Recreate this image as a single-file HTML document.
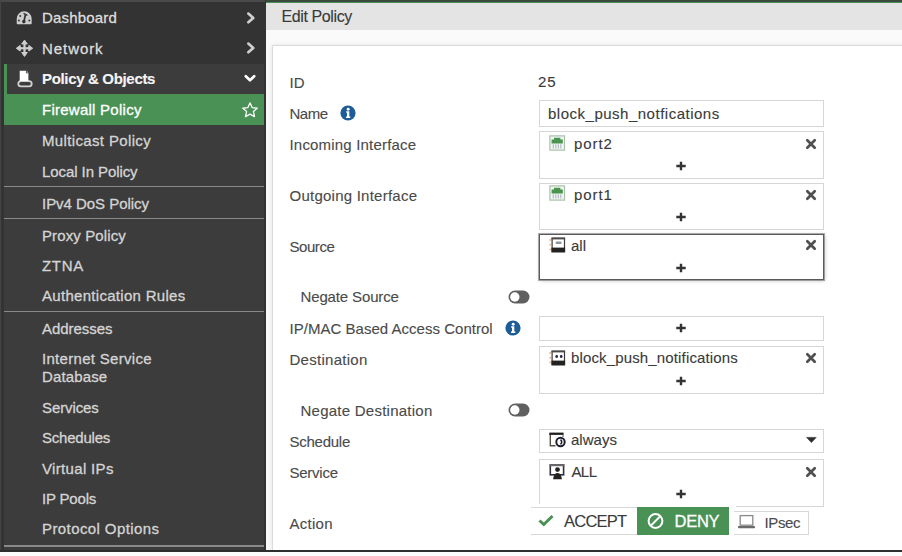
<!DOCTYPE html>
<html><head><meta charset="utf-8"><style>
html,body{margin:0;padding:0;width:902px;height:556px;overflow:hidden;background:#333;}
body{position:relative;font-family:"Liberation Sans",sans-serif;}
.t{position:absolute;white-space:nowrap;line-height:20px;-webkit-text-stroke:0.12px currentColor;}
.w{-webkit-text-stroke:0.3px currentColor;}
#side{position:absolute;left:0;top:0;width:266px;height:550px;background:#333;}
</style></head><body>
<div id="side"></div><div style="position:absolute;left:0;top:0;width:265px;height:1.5px;background:#4a4a4a"></div><div style="position:absolute;left:0;top:0;width:1px;height:550px;background:#444"></div><div style="position:absolute;left:4px;top:63.5px;width:260px;height:487px;background:#3c3c3c"></div><div style="position:absolute;left:4px;top:64px;width:3px;height:30px;background:#4a9155"></div><div style="position:absolute;left:4px;top:94px;width:260.2px;height:31px;background:#4a9155"></div><div style="position:absolute;left:4px;top:185.7px;width:260px;height:1.6px;background:#8a8a8a"></div><div style="position:absolute;left:4px;top:217.7px;width:260px;height:1.6px;background:#8a8a8a"></div><div style="position:absolute;left:4px;top:310.7px;width:260px;height:1.6px;background:#8a8a8a"></div><div style="position:absolute;left:4px;top:545.2px;width:260px;height:1.6px;background:#8a8a8a"></div><div class="t w" style="left:42px;top:7.54px;font-size:15px;color:#dedede;font-weight:normal;letter-spacing:0.177px;">Dashboard</div>
<div class="t w" style="left:42px;top:38.54px;font-size:15px;color:#dedede;font-weight:normal;letter-spacing:0.931px;">Network</div>
<div class="t" style="left:42px;top:68.74px;font-size:15px;color:#f4f4f4;font-weight:bold;letter-spacing:-0.332px;">Policy &amp; Objects</div>
<div class="t w" style="left:42px;top:99.64px;font-size:15px;color:#fff;font-weight:normal;letter-spacing:0.253px;">Firewall Policy</div>
<div class="t w" style="left:42px;top:130.54px;font-size:15px;color:#d4d4d4;font-weight:normal;letter-spacing:0.356px;">Multicast Policy</div>
<div class="t w" style="left:42px;top:161.54px;font-size:15px;color:#d4d4d4;font-weight:normal;letter-spacing:-0.080px;">Local In Policy</div>
<div class="t w" style="left:42px;top:193.54px;font-size:15px;color:#d4d4d4;font-weight:normal;letter-spacing:-0.039px;">IPv4 DoS Policy</div>
<div class="t w" style="left:42px;top:225.54px;font-size:15px;color:#d4d4d4;font-weight:normal;letter-spacing:0.116px;">Proxy Policy</div>
<div class="t w" style="left:42px;top:255.64px;font-size:15px;color:#d4d4d4;font-weight:normal;letter-spacing:0.712px;">ZTNA</div>
<div class="t w" style="left:42px;top:286.04px;font-size:15px;color:#d4d4d4;font-weight:normal;letter-spacing:0.298px;">Authentication Rules</div>
<div class="t w" style="left:42px;top:318.64px;font-size:15px;color:#d4d4d4;font-weight:normal;letter-spacing:-0.046px;">Addresses</div>
<div class="t w" style="left:42px;top:348.84px;font-size:15px;color:#d4d4d4;font-weight:normal;letter-spacing:0.303px;">Internet Service</div>
<div class="t w" style="left:42px;top:366.84px;font-size:15px;color:#d4d4d4;font-weight:normal;letter-spacing:0.141px;">Database</div>
<div class="t w" style="left:42px;top:397.84px;font-size:15px;color:#d4d4d4;font-weight:normal;letter-spacing:-0.103px;">Services</div>
<div class="t w" style="left:42px;top:427.64px;font-size:15px;color:#d4d4d4;font-weight:normal;letter-spacing:-0.219px;">Schedules</div>
<div class="t w" style="left:42px;top:458.64px;font-size:15px;color:#d4d4d4;font-weight:normal;letter-spacing:0.331px;">Virtual IPs</div>
<div class="t w" style="left:42px;top:489.04px;font-size:15px;color:#d4d4d4;font-weight:normal;letter-spacing:-0.185px;">IP Pools</div>
<div class="t w" style="left:42px;top:519.24px;font-size:15px;color:#d4d4d4;font-weight:normal;letter-spacing:0.407px;">Protocol Options</div>
<svg style="position:absolute;left:243.5px;top:10px" width="14" height="16"><path d="M4.3 3.6 L9.3 7.9 L4.3 12.2" fill="none" stroke="#cfcfcf" stroke-width="2.7" stroke-linecap="round" stroke-linejoin="round"/></svg><svg style="position:absolute;left:243.5px;top:40.3px" width="14" height="16"><path d="M4.3 3.6 L9.3 7.9 L4.3 12.2" fill="none" stroke="#cfcfcf" stroke-width="2.7" stroke-linecap="round" stroke-linejoin="round"/></svg><svg style="position:absolute;left:241.5px;top:72px" width="16" height="13"><path d="M3.8 4.3 L8 8.3 L12.2 4.3" fill="none" stroke="#fff" stroke-width="2.7" stroke-linecap="round" stroke-linejoin="round"/></svg><svg style="position:absolute;left:241px;top:101px" width="18" height="18"><path d="M9 1.8 L11.1 6.6 L16.3 7.1 L12.4 10.6 L13.5 15.7 L9 13.1 L4.5 15.7 L5.6 10.6 L1.7 7.1 L6.9 6.6 Z" fill="none" stroke="#fff" stroke-width="1.3" stroke-linejoin="round"/></svg><svg style="position:absolute;left:16.4px;top:9.7px" width="16.6" height="15.7" viewBox="0 0 18 17"><path d="M0.8 14.6 L0.8 9.4 A8.1 8.1 0 0 1 17 9.4 L17 14.6 Q17 15.4 16.2 15.4 L1.6 15.4 Q0.8 15.4 0.8 14.6 Z" fill="#cdcdcd"/><circle cx="4.6" cy="6.6" r="1.1" fill="#3a3a3a"/><circle cx="3.2" cy="11.4" r="1.1" fill="#3a3a3a"/><circle cx="14.4" cy="11.4" r="1.1" fill="#3a3a3a"/><path d="M8.6 12.8 L10.2 5" stroke="#333" stroke-width="1.9"/><path d="M8.2 3.6 L12.4 5.8" stroke="#333" stroke-width="1.5"/><circle cx="8.5" cy="12.6" r="1.9" fill="#333"/></svg><svg style="position:absolute;left:15.2px;top:39px" width="19" height="19"><g fill="#cdcdcd" stroke="#cdcdcd" stroke-width="1" stroke-linejoin="round"><path d="M9.5 1.1 L12.3 5 L6.7 5 Z"/><path d="M9.5 17.4 L12.3 13.5 L6.7 13.5 Z"/><path d="M1.3 9.25 L5.2 6.45 L5.2 12.05 Z"/><path d="M17.7 9.25 L13.8 6.45 L13.8 12.05 Z"/></g><g fill="#cdcdcd"><rect x="8.4" y="4.5" width="2.2" height="9.5"/><rect x="4.5" y="8.15" width="10" height="2.2"/></g></svg><svg style="position:absolute;left:15px;top:69px" width="20" height="20"><rect x="3.3" y="12.1" width="13.4" height="5.2" rx="2.6" fill="none" stroke="#cfcfcf" stroke-width="1.8"/><path d="M4.7 1.7 L11.6 1.7 L13.4 3.7 L13.4 12 L4.7 12 Z" fill="#fff"/><path d="M11.4 1.7 L11.4 3.9 L13.4 3.9" fill="none" stroke="#3c3c3c" stroke-width="0.9"/></svg><div style="position:absolute;left:266px;top:0;width:637px;height:1.5px;background:#3a4a3c"></div><div style="position:absolute;left:266px;top:1.5px;width:637px;height:1px;background:#4b8f55"></div><div style="position:absolute;left:266px;top:2.5px;width:637px;height:27px;background:#e4e4e4"></div><div style="position:absolute;left:266px;top:29.5px;width:637px;height:520px;background:#fafafa"></div><div style="position:absolute;left:272.5px;top:45.5px;width:640px;height:505px;background:#fff;box-shadow:0 0 1px 1px rgba(0,0,0,0.09), 0 0 5px 1px rgba(0,0,0,0.07)"></div><div style="position:absolute;left:0;top:549.5px;width:902px;height:2.5px;background:#2e2e2e"></div><div style="position:absolute;left:0;top:552px;width:902px;height:4px;background:#fcfcfc"></div><div class="t" style="left:281.5px;top:6.51px;font-size:16px;color:#3a3a3a;font-weight:normal;letter-spacing:-0.390px;">Edit Policy</div>
<div class="t" style="left:289.5px;top:73.44px;font-size:15px;color:#4a4a4a;font-weight:normal;letter-spacing:0.000px;">ID</div>
<div class="t" style="left:289.5px;top:103.94px;font-size:15px;color:#4a4a4a;font-weight:normal;letter-spacing:-0.505px;">Name</div>
<div class="t" style="left:289.5px;top:134.64px;font-size:15px;color:#4a4a4a;font-weight:normal;letter-spacing:0.188px;">Incoming Interface</div>
<div class="t" style="left:289.5px;top:185.94px;font-size:15px;color:#4a4a4a;font-weight:normal;letter-spacing:0.240px;">Outgoing Interface</div>
<div class="t" style="left:289.5px;top:237.34px;font-size:15px;color:#4a4a4a;font-weight:normal;letter-spacing:-0.446px;">Source</div>
<div class="t" style="left:300.5px;top:286.64px;font-size:15px;color:#4a4a4a;font-weight:normal;letter-spacing:-0.139px;">Negate Source</div>
<div class="t" style="left:289.5px;top:319.14px;font-size:15px;color:#4a4a4a;font-weight:normal;letter-spacing:0.024px;">IP/MAC Based Access Control</div>
<div class="t" style="left:289.5px;top:350.34px;font-size:15px;color:#4a4a4a;font-weight:normal;letter-spacing:0.275px;">Destination</div>
<div class="t" style="left:300.5px;top:401.44px;font-size:15px;color:#4a4a4a;font-weight:normal;letter-spacing:0.248px;">Negate Destination</div>
<div class="t" style="left:289.5px;top:431.94px;font-size:15px;color:#4a4a4a;font-weight:normal;letter-spacing:-0.250px;">Schedule</div>
<div class="t" style="left:289.5px;top:462.94px;font-size:15px;color:#4a4a4a;font-weight:normal;letter-spacing:-0.253px;">Service</div>
<div class="t" style="left:289.5px;top:514.04px;font-size:15px;color:#4a4a4a;font-weight:normal;letter-spacing:0.262px;">Action</div>
<div class="t" style="left:538px;top:72.44px;font-size:15px;color:#3a3a3a;font-weight:normal;letter-spacing:0.815px;">25</div>
<div style="position:absolute;left:538.5px;top:100px;width:285.8px;height:27px;box-sizing:border-box;border:1.3px solid #d6d6d6;background:#fff;"></div>
<div class="t" style="left:548px;top:103.84px;font-size:15px;color:#3a3a3a;font-weight:normal;letter-spacing:0.504px;">block_push_notfications</div>
<div style="position:absolute;left:538.5px;top:131px;width:285.8px;height:48px;box-sizing:border-box;border:1.3px solid #d6d6d6;background:#fff;"></div>
<div style="position:absolute;left:538.5px;top:183px;width:285.8px;height:47px;box-sizing:border-box;border:1.3px solid #d6d6d6;background:#fff;"></div>
<div style="position:absolute;left:538.5px;top:234px;width:285.8px;height:46px;box-sizing:border-box;border:1px solid #5a5a5a;background:#fff;box-shadow:0 0 0.5px 0.7px rgba(0,0,0,0.3), 1px 1px 4px rgba(0,0,0,0.2)"></div>
<div style="position:absolute;left:538.5px;top:316px;width:285.8px;height:25px;box-sizing:border-box;border:1.3px solid #d6d6d6;background:#fff;"></div>
<div style="position:absolute;left:538.5px;top:346px;width:285.8px;height:48px;box-sizing:border-box;border:1.3px solid #d6d6d6;background:#fff;"></div>
<div style="position:absolute;left:538.5px;top:429px;width:285.8px;height:24px;box-sizing:border-box;border:1.3px solid #d6d6d6;background:#fff;"></div>
<div style="position:absolute;left:538.5px;top:459px;width:285.8px;height:48px;box-sizing:border-box;border:1.3px solid #d6d6d6;background:#fff;"></div>
<svg style="position:absolute;left:674.6px;top:160.1px" width="12" height="12"><path d="M6 1.7 V10.3 M1.3 6 H10.7" stroke="#333" stroke-width="2.4"/></svg>
<svg style="position:absolute;left:674.6px;top:211.1px" width="12" height="12"><path d="M6 1.7 V10.3 M1.3 6 H10.7" stroke="#333" stroke-width="2.4"/></svg>
<svg style="position:absolute;left:674.6px;top:261.6px" width="12" height="12"><path d="M6 1.7 V10.3 M1.3 6 H10.7" stroke="#333" stroke-width="2.4"/></svg>
<svg style="position:absolute;left:674.6px;top:321.6px" width="12" height="12"><path d="M6 1.7 V10.3 M1.3 6 H10.7" stroke="#333" stroke-width="2.4"/></svg>
<svg style="position:absolute;left:674.6px;top:374.6px" width="12" height="12"><path d="M6 1.7 V10.3 M1.3 6 H10.7" stroke="#333" stroke-width="2.4"/></svg>
<svg style="position:absolute;left:674.6px;top:487.6px" width="12" height="12"><path d="M6 1.7 V10.3 M1.3 6 H10.7" stroke="#333" stroke-width="2.4"/></svg>
<svg style="position:absolute;left:804.2px;top:136.6px" width="14" height="14"><path d="M3.3 3.3 L10.7 10.7 M10.7 3.3 L3.3 10.7" stroke="#505050" stroke-width="2.7" stroke-linecap="round"/></svg>
<svg style="position:absolute;left:804.2px;top:187.6px" width="14" height="14"><path d="M3.3 3.3 L10.7 10.7 M10.7 3.3 L3.3 10.7" stroke="#505050" stroke-width="2.7" stroke-linecap="round"/></svg>
<svg style="position:absolute;left:804.2px;top:238.1px" width="14" height="14"><path d="M3.3 3.3 L10.7 10.7 M10.7 3.3 L3.3 10.7" stroke="#505050" stroke-width="2.7" stroke-linecap="round"/></svg>
<svg style="position:absolute;left:804.2px;top:350.6px" width="14" height="14"><path d="M3.3 3.3 L10.7 10.7 M10.7 3.3 L3.3 10.7" stroke="#505050" stroke-width="2.7" stroke-linecap="round"/></svg>
<svg style="position:absolute;left:804.2px;top:465.1px" width="14" height="14"><path d="M3.3 3.3 L10.7 10.7 M10.7 3.3 L3.3 10.7" stroke="#505050" stroke-width="2.7" stroke-linecap="round"/></svg>
<svg style="position:absolute;left:549px;top:135px" width="17" height="17"><rect x="0.9" y="0.9" width="14.6" height="14.2" fill="#f2f7f4" stroke="#a9c0a9" stroke-width="1.2"/><path d="M2.6 4.6 L5 4.6 L5 2.8 L11.4 2.8 L11.4 4.6 L13.8 4.6 L13.8 8.6 L2.6 8.6 Z" fill="#4a944e"/><path d="M4.3 9.2 V13.4 M6.8 9.2 V13.4 M9.3 9.2 V13.4 M11.8 9.2 V13.4" stroke="#b0b6c0" stroke-width="1.1"/></svg>
<div class="t" style="left:574px;top:134.24px;font-size:15px;color:#3a3a3a;font-weight:normal;letter-spacing:0.902px;">port2</div>
<svg style="position:absolute;left:549px;top:185.3px" width="17" height="17"><rect x="0.9" y="0.9" width="14.6" height="14.2" fill="#f2f7f4" stroke="#a9c0a9" stroke-width="1.2"/><path d="M2.6 4.6 L5 4.6 L5 2.8 L11.4 2.8 L11.4 4.6 L13.8 4.6 L13.8 8.6 L2.6 8.6 Z" fill="#4a944e"/><path d="M4.3 9.2 V13.4 M6.8 9.2 V13.4 M9.3 9.2 V13.4 M11.8 9.2 V13.4" stroke="#b0b6c0" stroke-width="1.1"/></svg>
<div class="t" style="left:574px;top:185.24px;font-size:15px;color:#3a3a3a;font-weight:normal;letter-spacing:0.902px;">port1</div>
<svg style="position:absolute;left:548px;top:236px" width="18" height="18"><rect x="4.1" y="2.2" width="12.4" height="13.6" fill="#fff" stroke="#3a3a3a" stroke-width="1.2"/><rect x="3.5" y="1.6" width="13.6" height="1.8" fill="#4a4a4a"/><rect x="3.5" y="11.6" width="13.6" height="4.6" fill="#222"/><rect x="7.6" y="5.6" width="6" height="2.4" rx="1.1" fill="#8e949e"/><circle cx="2.2" cy="4" r="0.9" fill="#e8b090"/><circle cx="2.2" cy="8.7" r="0.9" fill="#e8b090"/><circle cx="2.2" cy="13.3" r="0.9" fill="#e8b090"/></svg>
<div class="t" style="left:571px;top:235.54px;font-size:15px;color:#3a3a3a;font-weight:normal;letter-spacing:-0.004px;">all</div>
<svg style="position:absolute;left:548px;top:348.5px" width="18" height="18"><rect x="4.1" y="2.2" width="12.4" height="13.6" fill="#fff" stroke="#3a3a3a" stroke-width="1.2"/><rect x="3.5" y="1.6" width="13.6" height="1.8" fill="#4a4a4a"/><rect x="3.5" y="11.6" width="13.6" height="4.6" fill="#222"/><ellipse cx="8.7" cy="7.4" rx="1.3" ry="1.6" fill="#2a2a44"/><ellipse cx="13.2" cy="7.4" rx="1.3" ry="1.6" fill="#2a2a44"/><circle cx="2.2" cy="4" r="0.9" fill="#e8b090"/><circle cx="2.2" cy="8.7" r="0.9" fill="#e8b090"/><circle cx="2.2" cy="13.3" r="0.9" fill="#e8b090"/></svg>
<div class="t" style="left:571px;top:348.24px;font-size:15px;color:#3a3a3a;font-weight:normal;letter-spacing:0.146px;">block_push_notifications</div>
<svg style="position:absolute;left:548px;top:430px" width="18" height="18"><path d="M2.3 3.5 V15.8 H7.5" fill="none" stroke="#5e4e48" stroke-width="1.4"/><rect x="1.3" y="2.6" width="14.3" height="2.3" fill="#1e1e1e"/><path d="M15 4.5 V7" stroke="#555" stroke-width="1"/><circle cx="12.5" cy="12" r="4.2" fill="#fff" stroke="#1e1e2e" stroke-width="2"/><path d="M12.5 9.7 C14.1 11 14.1 13 12.5 14.3" fill="none" stroke="#1e1e2e" stroke-width="1.6"/></svg><div class="t" style="left:571px;top:430.24px;font-size:15px;color:#3a3a3a;font-weight:normal;letter-spacing:0.030px;">always</div>
<svg style="position:absolute;left:805px;top:435.5px" width="13" height="9"><path d="M1.6 1.4 H11.2 L6.4 6.6 Z" fill="#2e2e2e" stroke="#2e2e2e" stroke-width="0.6" stroke-linejoin="round"/></svg><svg style="position:absolute;left:548px;top:462px" width="18" height="18"><rect x="2.3" y="3" width="13.3" height="9.8" fill="#fff" stroke="#2e2e3e" stroke-width="1.6"/><rect x="1.5" y="2.2" width="14.9" height="2" fill="#6a6a6a"/><circle cx="9.5" cy="7.6" r="2.4" fill="#222"/><path d="M5 17.2 L5.8 14 Q6.8 11 9.5 11 Q12.2 11 13.2 14 L14 17.2 Z" fill="#222"/></svg><div class="t" style="left:571.4px;top:462.04px;font-size:15px;color:#3a3a3a;font-weight:normal;letter-spacing:-0.545px;">ALL</div>
<div style="position:absolute;left:530.5px;top:503.5px;width:205px;height:32px;background:#fff"></div><div style="position:absolute;left:530.5px;top:507px;width:107px;height:28px;box-sizing:border-box;border:1.3px solid #d8d8d8;border-left:none;background:#fff"></div><svg style="position:absolute;left:537px;top:513px" width="18" height="15"><path d="M2.5 7.5 L6.8 11.5 L15.5 3" fill="none" stroke="#4a9155" stroke-width="3"/></svg><div class="t" style="left:564px;top:511.25px;font-size:16.5px;color:#3a3a3a;font-weight:normal;letter-spacing:-0.746px;">ACCEPT</div>
<div style="position:absolute;left:637px;top:507.3px;width:91.5px;height:27.5px;background:#4a9155"></div><svg style="position:absolute;left:646px;top:511.5px" width="19" height="18"><circle cx="9.5" cy="9" r="6.9" fill="none" stroke="#fff" stroke-width="2"/><path d="M5 13.5 L14 4.5" stroke="#fff" stroke-width="2"/></svg><div class="t w" style="left:674.5px;top:510.85px;font-size:16.5px;color:#fff;font-weight:normal;letter-spacing:-0.248px;">DENY</div>
<div style="position:absolute;left:734px;top:511px;width:74.5px;height:23.5px;box-sizing:border-box;border:1.3px solid #d8d8d8;border-left:none;background:#fff"></div><svg style="position:absolute;left:737px;top:514px" width="20" height="16"><rect x="3.2" y="1.6" width="12.6" height="9.6" fill="#fff" stroke="#8a8a8a" stroke-width="1.3"/><rect x="1" y="12" width="17" height="2.2" rx="0.8" fill="#6a6a6a"/></svg><div class="t" style="left:764.5px;top:512.64px;font-size:15px;color:#4a4a4a;font-weight:normal;letter-spacing:-0.379px;">IPsec</div>
<svg style="position:absolute;left:340.2px;top:104.6px" width="16" height="16"><circle cx="8" cy="8" r="7.6" fill="#1d5c97"/><path d="M6.2 6.3 H9.3 V11.4 H10.3 V12.9 H6 V11.4 H7 V7.7 H6.2 Z" fill="#fff"/><circle cx="8.2" cy="4.2" r="1.45" fill="#fff"/></svg>
<svg style="position:absolute;left:504.79999999999995px;top:320.2px" width="16" height="16"><circle cx="8" cy="8" r="7.6" fill="#1d5c97"/><path d="M6.2 6.3 H9.3 V11.4 H10.3 V12.9 H6 V11.4 H7 V7.7 H6.2 Z" fill="#fff"/><circle cx="8.2" cy="4.2" r="1.45" fill="#fff"/></svg>
<svg style="position:absolute;left:508px;top:289.8px" width="22" height="14"><rect x="0.5" y="0.5" width="21" height="13" rx="6.5" fill="#606060"/><circle cx="6.8" cy="7" r="4.7" fill="#fff"/></svg>
<svg style="position:absolute;left:508px;top:403.4px" width="22" height="14"><rect x="0.5" y="0.5" width="21" height="13" rx="6.5" fill="#606060"/><circle cx="6.8" cy="7" r="4.7" fill="#fff"/></svg>

</body></html>
